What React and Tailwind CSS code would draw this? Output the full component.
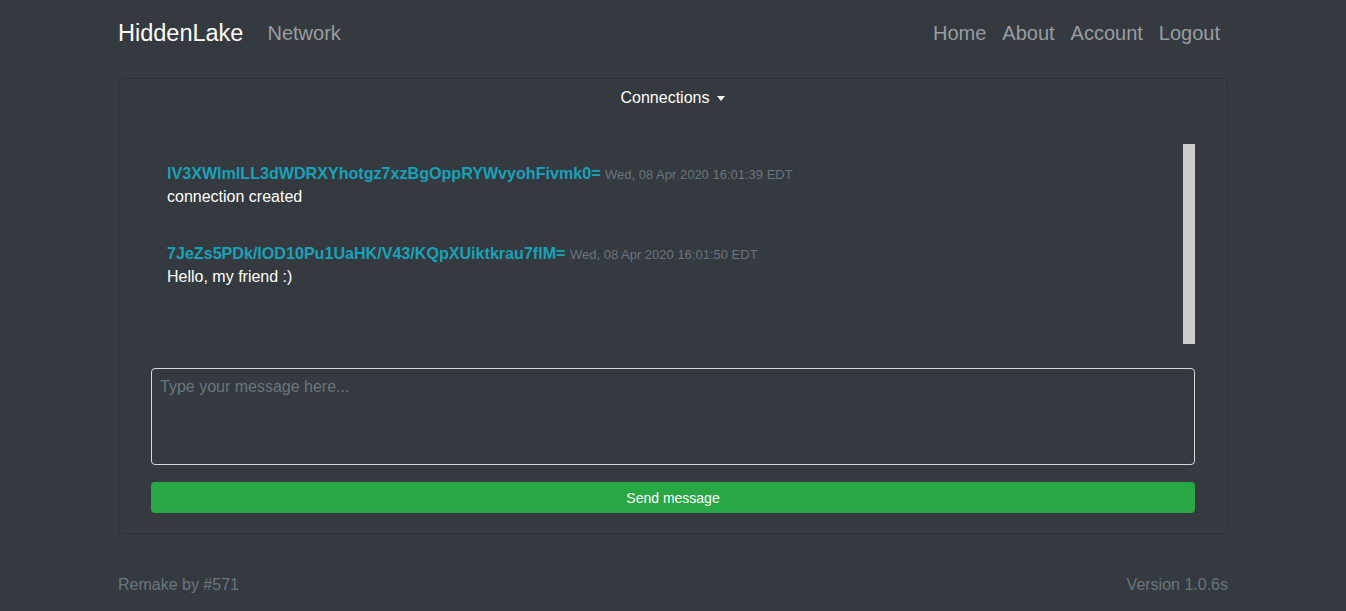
import React from "react";

const messages = [
  {
    from: "lV3XWlmlLL3dWDRXYhotgz7xzBgOppRYWvyohFivmk0=",
    time: "Wed, 08 Apr 2020 16:01:39 EDT",
    text: "connection created",
  },
  {
    from: "7JeZs5PDk/lOD10Pu1UaHK/V43/KQpXUiktkrau7flM=",
    time: "Wed, 08 Apr 2020 16:01:50 EDT",
    text: "Hello, my friend :)",
  },
];

function App() {
  return (
    <div className="min-h-screen bg-[#343a40] text-white font-['Liberation_Sans',Arial,sans-serif]">
      <div className="w-[1110px] mx-auto">
        {/* NAVBAR */}
        <nav className="h-[66px] flex items-center justify-between">
          <div className="flex items-center">
            <span className="text-[23.5px] pt-px">HiddenLake</span>
            <span className="ml-[24px] text-xl text-[#9a9da0]">Network</span>
          </div>
          <div className="flex items-center text-xl text-[#9a9da0]">
            <a className="px-2">Home</a>
            <a className="px-2">About</a>
            <a className="px-2">Account</a>
            <a className="px-2">Logout</a>
          </div>
        </nav>

        {/* CHAT CARD */}
        <div className="mt-3 border border-[#2c3136] rounded px-8 pb-5">
          <div className="h-[65px] pt-[7px] text-center">
            <span className="inline-flex items-center gap-2 leading-6">
              Connections
              <span className="border-x-[4px] border-x-transparent border-t-[5px] border-t-white" />
            </span>
          </div>

          <div className="h-[200px] flex">
            <div className="flex-1 px-4 pt-[17px]">
              {messages.map((m, i) => (
                <div key={i} className="mb-8">
                  <div className="h-6 leading-6">
                    <span className="font-bold text-[16.1px] text-[#17a2b8]">{m.from}</span>{" "}
                    <span className="text-[13px] text-[#6c757d]">{m.time}</span>
                  </div>
                  <div className="leading-6">{m.text}</div>
                </div>
              ))}
            </div>
            <div className="w-3 bg-[#cdcdcd]" />
          </div>

          <textarea
            className="mt-6 block w-full h-[97px] rounded border border-[#d8d8d8] bg-transparent px-2 py-[6px] text-base outline-none resize-none placeholder:text-[#6c757d]"
            placeholder="Type your message here..."
          />

          <button className="mt-[17px] w-full h-[31px] rounded bg-[#28a745] text-sm text-white">
            Send message
          </button>
        </div>

        {/* FOOTER */}
        <footer className="mt-[39px] flex justify-between leading-6 text-[#6c757d]">
          <span>Remake by #571</span>
          <span>Version 1.0.6s</span>
        </footer>
      </div>
    </div>
  );
}

export default App;
